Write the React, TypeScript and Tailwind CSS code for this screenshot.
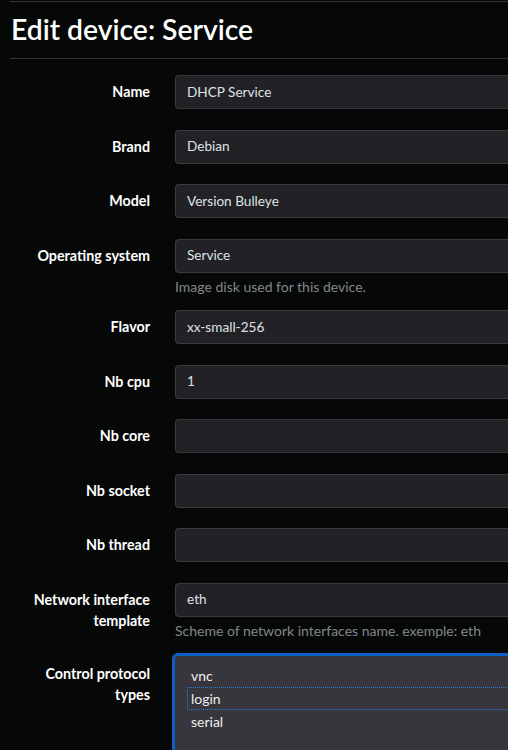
const fields = [
  { label: 'Name', value: 'DHCP Service' },
  { label: 'Brand', value: 'Debian' },
  { label: 'Model', value: 'Version Bulleye' },
  { label: 'Operating system', value: 'Service', help: 'Image disk used for this device.' },
  { label: 'Flavor', value: 'xx-small-256' },
  { label: 'Nb cpu', value: '1' },
  { label: 'Nb core', value: '' },
  { label: 'Nb socket', value: '' },
  { label: 'Nb thread', value: '' },
  {
    label: 'Network interface template',
    value: 'eth',
    help: 'Scheme of network interfaces name. exemple: eth',
  },
];

const protocols = ['vnc', 'login', 'serial'];

export default function App() {
  return (
    <main
      className="min-h-[750px] bg-[#060707] pl-[10px] text-[#dee2e6] overflow-hidden"
      style={{ fontFamily: 'Lato, "Open Sans", sans-serif' }}
    >
      <div className="mt-px border-t border-[#2e3234]">
        <h1 className="h-[57px] flex items-center pl-px pb-[2px] text-[28.3px] font-semibold text-white border-b border-[#2e3234]">
          Edit device: Service
        </h1>
      </div>

      <form className="pt-[16px] flex flex-col">
        {fields.map((f) => (
          <div key={f.label} className="grid grid-cols-[140px_1fr] gap-x-[25px] mb-[20.5px]">
            <label className="pl-[15px] pt-[6px] text-right text-[14.3px] leading-[21px] font-bold text-white">
              {f.label}
            </label>
            <div className="flex flex-col">
              <div className="h-[34px] flex items-center px-[11px] rounded-l-[4px] border border-r-0 border-[#3a3a3f] bg-[#222226] text-[13.6px]">
                {f.value}
              </div>
              {f.help && (
                <div className="mt-[4px] -mb-[7px] text-[14px] leading-[20px] text-[#82878c]">{f.help}</div>
              )}
            </div>
          </div>
        ))}

        <div className="grid grid-cols-[140px_1fr] gap-x-[25px]">
          <label className="pl-[15px] pt-[9px] text-right text-[14.3px] leading-[21px] font-bold text-white">
            Control protocol types
          </label>
          <div className="h-[120px] -ml-[3px] -mt-[1px] rounded-tl-[6px] border-[3px] border-r-0 border-[#0d5fc4] bg-[#37363c] pt-[8px] pl-[12px] text-[14px] text-[#eeeeee]">
            {protocols.map((p) => (
              <div
                key={p}
                className={
                  p === 'login'
                    ? 'h-[23px] leading-[21px] pl-[3px] border border-r-0 border-dotted border-[#2a7fd4]'
                    : 'h-[23px] leading-[23px] pl-[4px]'
                }
              >
                {p}
              </div>
            ))}
          </div>
        </div>
      </form>
    </main>
  );
}
